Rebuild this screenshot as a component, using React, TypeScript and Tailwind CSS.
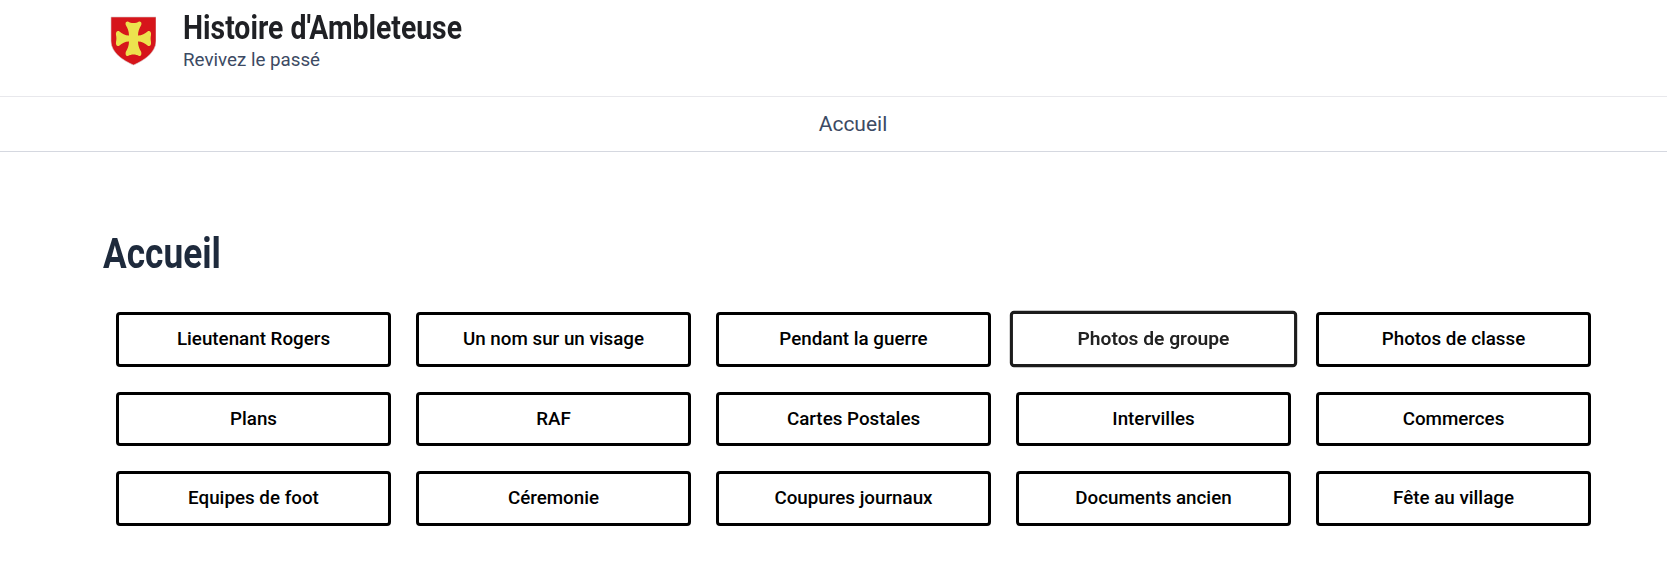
const rows = [
  ["Lieutenant Rogers", "Un nom sur un visage", "Pendant la guerre", "Photos de groupe", "Photos de classe"],
  ["Plans", "RAF", "Cartes Postales", "Intervilles", "Commerces"],
  ["Equipes de foot", "Céremonie", "Coupures journaux", "Documents ancien", "Fête au village"],
];

function Shield() {
  return (
    <svg width="46" height="50" viewBox="0 0 46 50" className="block blur-[0.5px]">
      <path d="M1 1 H46 V25 C46 37 33 45 23.5 49 C14 45 1 37 1 25 Z" fill="#d6151b" stroke="#d9c9c9" strokeWidth="0.6" />
      <path
        d="M18 5.5 C21 7.5 26 7.5 29 5.5 C31.5 5 32 7.5 31 9.5 C29.5 12 28 15 28 19.5 C32 19.5 35 17.5 37.5 15.5 C40 14 41.5 16.5 41 19 C40.5 21 40.5 24 41 26 C41.5 29 40 31 37.5 29.5 C35 27.5 32 25.5 28 25.5 C28 30 29.5 33 31 35.5 C32 38 31 40.5 29 40 C26 38 21 38 18 40 C16 40.5 15 38 16 35.5 C17.5 33 19 30 19 25.5 C15 25.5 12 27.5 9.5 29.5 C7 31 5.5 29 6 26 C6.5 24 6.5 21 6 19 C5.5 16.5 7 14 9.5 15.5 C12 17.5 15 19.5 19 19.5 C19 15 17.5 12 16 9.5 C15 7.5 15.5 5 18 5.5 Z"
        fill="#ece24e"
      />
    </svg>
  );
}

export default function App() {
  return (
    <div className="min-h-[576px] w-full bg-white font-['Roboto',sans-serif] overflow-hidden">
      <header className="h-[97px] border-b border-[#e8e8ec] pl-[110px] flex items-start">
        <div className="mt-[16px]"><Shield /></div>
        <div className="ml-[27px]">
          <div className="mt-[9px] text-[33px] leading-[38px] font-bold text-[#1f2024] origin-left scale-x-[0.86] whitespace-nowrap w-[380px]">Histoire d'Ambleteuse</div>
          <div className="text-[18.75px] leading-[22px] text-[#3c4a63] mt-[2px]">Revivez le passé</div>
        </div>
      </header>
      <nav className="h-[55px] pt-[1px] border-b border-[#d5d8e0] flex items-center justify-center pl-[39px] text-[21px] text-[#3c4a63]">
        Accueil
      </nav>
      <main className="pl-[103px]">
        <h1 className="mt-[79px] h-[46px] text-[42px] leading-[46px] font-bold text-[#1e2a3c] origin-left scale-x-[0.84] whitespace-nowrap">Accueil</h1>
        <div className="mt-[35.3px] ml-[13px] w-[1475px] flex flex-col gap-[25.1px]">
          {rows.map((row) => (
            <div key={row[0]} className="grid grid-cols-5 gap-x-[25px]">
              {row.map((label) => {
                const hovered = label === "Photos de groupe";
                return (
                  <a
                    key={label}
                    className={
                      hovered
                        ? "h-[54.4px] flex items-center justify-center rounded-[4px] border-[3px] border-[#1c1c1c] text-[18.4px] font-semibold text-[#222222] scale-[1.045]"
                        : "h-[54.4px] flex items-center justify-center rounded-[4px] border-[3px] border-black text-[18.8px] font-medium text-black"
                    }
                  >
                    {label}
                  </a>
                );
              })}
            </div>
          ))}
        </div>
      </main>
    </div>
  );
}
